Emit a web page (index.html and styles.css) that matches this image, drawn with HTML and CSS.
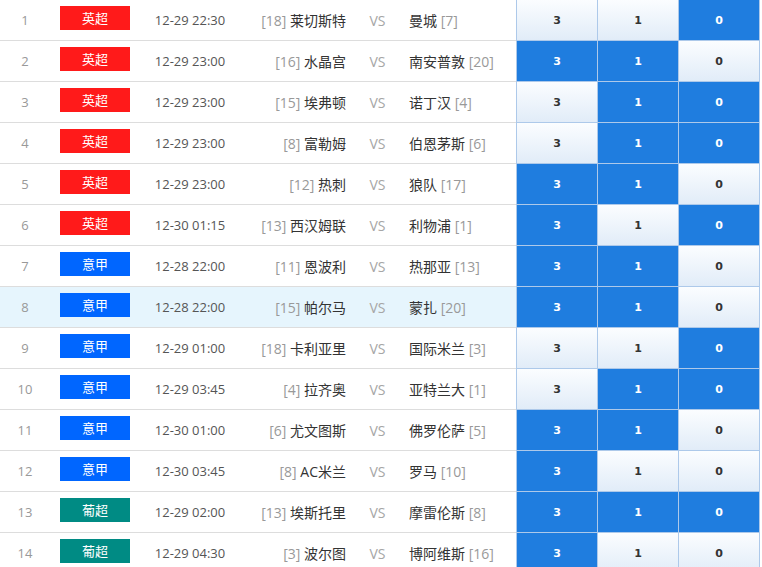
FILE: index.html
```html
<!DOCTYPE html>
<html lang="zh">
<head>
<meta charset="utf-8">
<link rel="stylesheet" href="styles.css">
</head>
<body>
<div class="list">
  <div class="row"><div class="info"><span class="idx">1</span><span class="lg"><span class="badge epl">英超</span></span><span class="time">12-29 22:30</span><span class="home"><em>[18]</em> 莱切斯特</span><span class="vs">VS</span><span class="away">曼城 <em>[7]</em></span></div><span class="odd">3</span><span class="odd">1</span><span class="odd on">0</span></div>
  <div class="row"><div class="info"><span class="idx">2</span><span class="lg"><span class="badge epl">英超</span></span><span class="time">12-29 23:00</span><span class="home"><em>[16]</em> 水晶宫</span><span class="vs">VS</span><span class="away">南安普敦 <em>[20]</em></span></div><span class="odd on">3</span><span class="odd on">1</span><span class="odd">0</span></div>
  <div class="row"><div class="info"><span class="idx">3</span><span class="lg"><span class="badge epl">英超</span></span><span class="time">12-29 23:00</span><span class="home"><em>[15]</em> 埃弗顿</span><span class="vs">VS</span><span class="away">诺丁汉 <em>[4]</em></span></div><span class="odd">3</span><span class="odd on">1</span><span class="odd on">0</span></div>
  <div class="row"><div class="info"><span class="idx">4</span><span class="lg"><span class="badge epl">英超</span></span><span class="time">12-29 23:00</span><span class="home"><em>[8]</em> 富勒姆</span><span class="vs">VS</span><span class="away">伯恩茅斯 <em>[6]</em></span></div><span class="odd">3</span><span class="odd on">1</span><span class="odd on">0</span></div>
  <div class="row"><div class="info"><span class="idx">5</span><span class="lg"><span class="badge epl">英超</span></span><span class="time">12-29 23:00</span><span class="home"><em>[12]</em> 热刺</span><span class="vs">VS</span><span class="away">狼队 <em>[17]</em></span></div><span class="odd on">3</span><span class="odd on">1</span><span class="odd">0</span></div>
  <div class="row"><div class="info"><span class="idx">6</span><span class="lg"><span class="badge epl">英超</span></span><span class="time">12-30 01:15</span><span class="home"><em>[13]</em> 西汉姆联</span><span class="vs">VS</span><span class="away">利物浦 <em>[1]</em></span></div><span class="odd on">3</span><span class="odd">1</span><span class="odd on">0</span></div>
  <div class="row"><div class="info"><span class="idx">7</span><span class="lg"><span class="badge sa">意甲</span></span><span class="time">12-28 22:00</span><span class="home"><em>[11]</em> 恩波利</span><span class="vs">VS</span><span class="away">热那亚 <em>[13]</em></span></div><span class="odd on">3</span><span class="odd on">1</span><span class="odd">0</span></div>
  <div class="row hl"><div class="info"><span class="idx">8</span><span class="lg"><span class="badge sa">意甲</span></span><span class="time">12-28 22:00</span><span class="home"><em>[15]</em> 帕尔马</span><span class="vs">VS</span><span class="away">蒙扎 <em>[20]</em></span></div><span class="odd on">3</span><span class="odd on">1</span><span class="odd">0</span></div>
  <div class="row"><div class="info"><span class="idx">9</span><span class="lg"><span class="badge sa">意甲</span></span><span class="time">12-29 01:00</span><span class="home"><em>[18]</em> 卡利亚里</span><span class="vs">VS</span><span class="away">国际米兰 <em>[3]</em></span></div><span class="odd">3</span><span class="odd">1</span><span class="odd on">0</span></div>
  <div class="row"><div class="info"><span class="idx">10</span><span class="lg"><span class="badge sa">意甲</span></span><span class="time">12-29 03:45</span><span class="home"><em>[4]</em> 拉齐奥</span><span class="vs">VS</span><span class="away">亚特兰大 <em>[1]</em></span></div><span class="odd">3</span><span class="odd on">1</span><span class="odd on">0</span></div>
  <div class="row"><div class="info"><span class="idx">11</span><span class="lg"><span class="badge sa">意甲</span></span><span class="time">12-30 01:00</span><span class="home"><em>[6]</em> 尤文图斯</span><span class="vs">VS</span><span class="away">佛罗伦萨 <em>[5]</em></span></div><span class="odd on">3</span><span class="odd on">1</span><span class="odd">0</span></div>
  <div class="row"><div class="info"><span class="idx">12</span><span class="lg"><span class="badge sa">意甲</span></span><span class="time">12-30 03:45</span><span class="home"><em>[8]</em> AC米兰</span><span class="vs">VS</span><span class="away">罗马 <em>[10]</em></span></div><span class="odd on">3</span><span class="odd">1</span><span class="odd">0</span></div>
  <div class="row"><div class="info"><span class="idx">13</span><span class="lg"><span class="badge pl">葡超</span></span><span class="time">12-29 02:00</span><span class="home"><em>[13]</em> 埃斯托里</span><span class="vs">VS</span><span class="away">摩雷伦斯 <em>[8]</em></span></div><span class="odd on">3</span><span class="odd on">1</span><span class="odd on">0</span></div>
  <div class="row"><div class="info"><span class="idx">14</span><span class="lg"><span class="badge pl">葡超</span></span><span class="time">12-29 04:30</span><span class="home"><em>[3]</em> 波尔图</span><span class="vs">VS</span><span class="away">博阿维斯 <em>[16]</em></span></div><span class="odd on">3</span><span class="odd">1</span><span class="odd">0</span></div>
</div>
</body>
</html>
```
FILE: styles.css
```css
html, body {
  margin: 0;
  padding: 0;
  background: #fff;
}
body {
  font-family: "Open Sans", "Noto Sans CJK SC", sans-serif;
  font-size: 13px;
  color: #333;
}
.list {
  width: 760px;
}
.row {
  display: flex;
  height: 41px;
}
.info {
  display: flex;
  align-items: center;
  width: 516px;
  height: 40px;
  border-bottom: 1px solid #dddddd;
}
.row.hl .info {
  background: #e6f5fd;
}
.idx {
  width: 50px;
  text-align: center;
  color: #999;
}
.lg {
  width: 90px;
  display: flex;
  justify-content: center;
}
.badge {
  width: 70px;
  height: 24px;
  line-height: 24px;
  text-align: center;
  color: #fff;
  margin-bottom: 4px;
  font-family: "Noto Sans CJK SC", sans-serif;
}
.badge.epl { background: #ff1a1a; }
.badge.sa { background: #0066ff; }
.badge.pl { background: #008b84; }
.time {
  width: 100px;
  text-align: center;
  color: #555;
}
.home {
  width: 115px;
  padding-right: 9px;
  box-sizing: border-box;
  text-align: right;
  white-space: nowrap;
  font-size: 14px;
}
.vs {
  width: 45px;
  text-align: center;
  color: #a6a6a6;
  font-size: 14px;
}
.away {
  width: 116px;
  padding-left: 9px;
  box-sizing: border-box;
  white-space: nowrap;
  font-size: 14px;
}
em {
  font-style: normal;
  color: #999;
}
.odd {
  width: 80px;
  height: 40px;
  border-right: 1px solid #adc9ea;
  border-bottom: 1px solid #adc9ea;
  display: flex;
  align-items: center;
  justify-content: center;
  font-family: "DejaVu Sans", sans-serif;
  font-weight: bold;
  font-size: 11px;
  color: #333;
  background: linear-gradient(#fbfdff, #e1ecf8);
}
.info + .odd {
  border-left: 1px solid #adc9ea;
}
.odd.on {
  background: #1f7ddf;
  color: #fff;
}
```
